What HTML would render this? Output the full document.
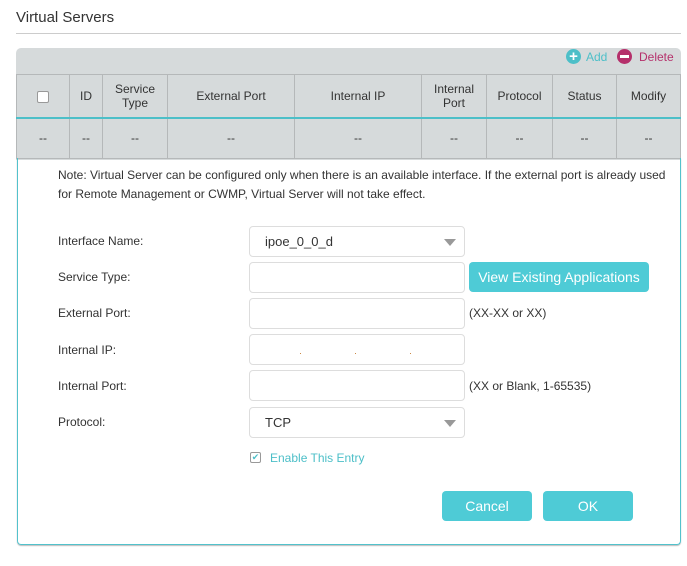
<!DOCTYPE html>
<html><head><meta charset="utf-8"><style>
*{box-sizing:border-box;margin:0;padding:0}
body{width:687px;height:566px;background:#fff;font-family:"Liberation Sans",sans-serif;font-size:12px;color:#333;position:relative;overflow:hidden}
.a{position:absolute}
.title{left:16px;top:9px;font-size:15px;color:#333}
.hr{left:16px;top:33px;width:665px;height:1px;background:#ccc}
.panel{left:16px;top:48px;width:665px;height:112px;background:#d6dadb;border-radius:5px 5px 0 0}
table{position:absolute;left:16px;top:74px;width:665px;border-collapse:collapse;font-size:12px;color:#333}
td{border:1px solid #b5b8b9;text-align:center;line-height:14px}
tr.h td{height:43px;border-bottom:2px solid #4dbfc8}
tr.d td{height:41px;border-top:none}
.form{left:17px;top:158px;width:664px;height:387px;border:1px solid #52c2cc;border-top:none;border-radius:0 0 4px 4px;box-shadow:0 1px 1px #bbb}
.note{left:58px;top:166px;width:620px;line-height:19px;color:#333}
.lbl{left:58px}
.inp{left:249px;width:216px;height:31px;border:1px solid #ddd;border-radius:4px;background:#fff;padding-left:15px;line-height:29px;font-size:13px;color:#333}
.arr{position:absolute;right:8px;top:12px;width:0;height:0;border-left:6px solid transparent;border-right:6px solid transparent;border-top:7px solid #999}
.hint{left:469px}
.btn{background:#4ecbd6;color:#fff;border-radius:4px;text-align:center}
</style></head><body>
<div class="a title">Virtual Servers</div>
<div class="a hr"></div>
<div class="a panel"></div>
<div class="a" style="left:566px;top:49px;width:15px;height:15px;border-radius:50%;background:#4dbfc8;color:#fff;font-weight:bold;font-size:15px;line-height:15px;text-align:center">+</div>
<div class="a" style="left:586px;top:50px;color:#4dbfc8">Add</div>
<div class="a" style="left:617px;top:49px;width:15px;height:15px;border-radius:50%;background:#b5306b"><div style="margin:6px 3px;height:3px;background:#fff"></div></div>
<div class="a" style="left:639px;top:50px;color:#b5306b">Delete</div>
<table>
<tr class="h"><td style="width:53px"><span style="display:inline-block;width:12px;height:12px;border:1px solid #999;border-radius:2px;background:#fff;vertical-align:middle"></span></td><td style="width:33px">ID</td><td style="width:65px">Service<br>Type</td><td style="width:127px">External Port</td><td style="width:127px">Internal IP</td><td style="width:65px">Internal<br>Port</td><td style="width:66px">Protocol</td><td style="width:64px">Status</td><td>Modify</td></tr>
<tr class="d"><td>--</td><td>--</td><td>--</td><td>--</td><td>--</td><td>--</td><td>--</td><td>--</td><td>--</td></tr>
</table>
<div class="a form"></div>
<div class="a note">Note: Virtual Server can be configured only when there is an available interface. If the external port is already used for Remote Management or CWMP, Virtual Server will not take effect.</div>
<div class="a lbl" style="top:234px">Interface Name:</div>
<div class="a inp" style="top:226px">ipoe_0_0_d<span class="arr"></span></div>
<div class="a lbl" style="top:270px">Service Type:</div>
<div class="a inp" style="top:262px"></div>
<div class="a btn" style="left:469px;top:262px;width:180px;height:30px;line-height:30px;font-size:14px">View Existing Applications</div>
<div class="a lbl" style="top:306px">External Port:</div>
<div class="a inp" style="top:298px"></div>
<div class="a hint" style="top:306px">(XX-XX or XX)</div>
<div class="a lbl" style="top:343px">Internal IP:</div>
<div class="a inp" style="top:334px"><span class="a" style="left:50px;top:18px;width:1px;height:1px;background:#c84"></span><span class="a" style="left:105px;top:18px;width:1px;height:1px;background:#c84"></span><span class="a" style="left:160px;top:18px;width:1px;height:1px;background:#c84"></span></div>
<div class="a lbl" style="top:379px">Internal Port:</div>
<div class="a inp" style="top:370px"></div>
<div class="a hint" style="top:379px">(XX or Blank, 1-65535)</div>
<div class="a lbl" style="top:415px">Protocol:</div>
<div class="a inp" style="top:407px">TCP<span class="arr"></span></div>
<div class="a" style="left:250px;top:452px;width:11px;height:11px;border:1px solid #999;border-radius:2px;color:#4dbfc8;font-size:9px;line-height:9px;text-align:center">✔</div>
<div class="a" style="left:270px;top:451px;color:#4dbfc8">Enable This Entry</div>
<div class="a btn" style="left:442px;top:491px;width:90px;height:30px;line-height:30px;font-size:14px">Cancel</div>
<div class="a btn" style="left:543px;top:491px;width:90px;height:30px;line-height:30px;font-size:14px">OK</div>
</body></html>
